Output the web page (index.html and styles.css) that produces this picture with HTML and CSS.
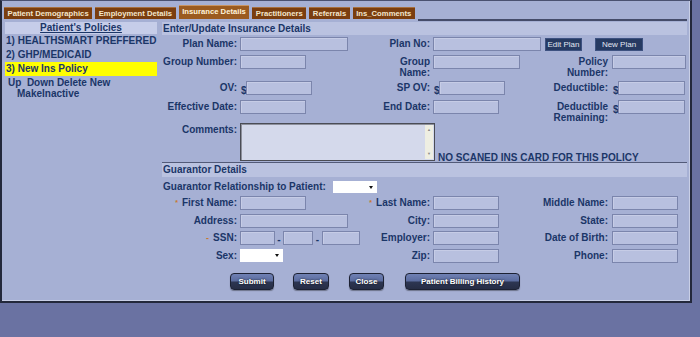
FILE: index.html
```html
<!DOCTYPE html>
<html lang="en">
<head>
    <meta charset="UTF-8">
    <title>Insurance Details</title>
    <link rel="stylesheet" href="styles.css">
</head>
<body>

<div class="frame">
    <div class="tabs">
        <span class="tab">Patient Demographics</span>
        <span class="tab">Employment Details</span>
        <span class="tab active">Insurance Details</span>
        <span class="tab">Practitioners</span>
        <span class="tab">Referrals</span>
        <span class="tab">Ins_Comments</span>
        <span class="tab-fill"></span>
    </div>

    <div class="main">
        <!-- policy list -->
        <div class="policies">
            <div class="pol-head"><u>Patient's Policies</u></div>
            <div class="pol">1) HEALTHSMART PREFFERED</div>
            <div class="pol">2) GHP/MEDICAID</div>
            <div class="pol selected">3) New Ins Policy</div>
            <div class="pol-actions">
                <div>Up&nbsp;&nbsp;Down Delete New</div>
                <div class="indent">MakeInactive</div>
            </div>
        </div>

        <!-- insurance form -->
        <div class="details">
            <div class="sec-head">Enter/Update Insurance Details</div>
            <div class="grid">
                <div class="lbl">Plan Name:</div>
                <div class="fld"><span class="in w108"></span></div>
                <div class="lbl">Plan No:</div>
                <div class="fld"><span class="in w108"></span></div>
                <div class="fld plan-btns">
                    <span class="pbtn edit">Edit Plan</span>
                    <span class="pbtn new">New Plan</span>
                </div>

                <div class="lbl">Group Number:</div>
                <div class="fld"><span class="in w66"></span></div>
                <div class="lbl">Group<br>Name:</div>
                <div class="fld"><span class="in w87"></span></div>
                <div class="lbl lbl3">Policy<br>Number:</div>
                <div class="fld"><span class="in w74"></span></div>

                <div class="lbl">OV:</div>
                <div class="fld"><span class="dollar">$</span><span class="in w66"></span></div>
                <div class="lbl">SP OV:</div>
                <div class="fld"><span class="dollar">$</span><span class="in w66"></span></div>
                <div class="lbl lbl3">Deductible:</div>
                <div class="fld"><span class="dollar">$</span><span class="in w67"></span></div>

                <div class="lbl">Effective Date:</div>
                <div class="fld"><span class="in w66"></span></div>
                <div class="lbl">End Date:</div>
                <div class="fld"><span class="in w66"></span></div>
                <div class="lbl lbl3 tight">Deductible<br>Remaining:</div>
                <div class="fld"><span class="dollar">$</span><span class="in w67"></span></div>

                <div class="lbl">Comments:</div>
                <div class="fld comments-row">
                    <div class="comments">
                        <div class="comments-text"></div>
                        <div class="scroll"><span>&#9650;</span><span>&#9660;</span></div>
                    </div>
                    <span class="note">NO SCANED INS CARD FOR THIS POLICY</span>
                </div>
            </div>

            <div class="sec-head guar">Guarantor Details</div>
            <div class="rel-row">
                <span class="rel-lbl">Guarantor Relationship to Patient:</span>
                <span class="select w44"></span>
            </div>

            <div class="grid g2">
                <div class="lbl"><span class="req">*</span>First Name:</div>
                <div class="fld"><span class="in w66"></span></div>
                <div class="lbl"><span class="req">*</span>Last Name:</div>
                <div class="fld"><span class="in w66"></span></div>
                <div class="lbl lbl3">Middle Name:</div>
                <div class="fld"><span class="in w66"></span></div>

                <div class="lbl">Address:</div>
                <div class="fld"><span class="in w108"></span></div>
                <div class="lbl">City:</div>
                <div class="fld"><span class="in w66"></span></div>
                <div class="lbl lbl3">State:</div>
                <div class="fld"><span class="in w66"></span></div>

                <div class="lbl"><span class="req dash">-</span>SSN:</div>
                <div class="fld">
                    <span class="in w37"></span><span class="ssn-dash">-</span>
                    <span class="in w32"></span><span class="ssn-dash">-</span>
                    <span class="in w41"></span>
                </div>
                <div class="lbl">Employer:</div>
                <div class="fld"><span class="in w66"></span></div>
                <div class="lbl lbl3">Date of Birth:</div>
                <div class="fld"><span class="in w66"></span></div>

                <div class="lbl">Sex:</div>
                <div class="fld"><span class="select w43"></span></div>
                <div class="lbl">Zip:</div>
                <div class="fld"><span class="in w66"></span></div>
                <div class="lbl lbl3">Phone:</div>
                <div class="fld"><span class="in w66"></span></div>
            </div>

            <div class="actions">
                <span class="btn submit">Submit</span>
                <span class="btn reset">Reset</span>
                <span class="btn close">Close</span>
                <span class="btn history">Patient Billing History</span>
            </div>
        </div>
    </div>
</div>

</body>
</html>
```

FILE: styles.css
```css
* {
    box-sizing: border-box;
}

body {
    margin: 0;
    background-color: #6a72a2;
    font-family: "Liberation Sans", Arial, sans-serif;
    font-size: 10px;
    font-weight: bold;
    color: #1b3668;
}

/* main panel */
.frame {
    width: 692px;
    height: 303px;
    background-color: #a6b0d4;
    border: 2px solid #23283b;
    border-top: 1px solid #4a5170;
    box-shadow: inset -1px -1px 0 #c9cfe6;
    padding: 4px 1px 0 2px;
}

/* tabs */
.tabs {
    display: flex;
    align-items: flex-end;
    height: 16px;
}

.tab {
    height: 12px;
    line-height: 11px;
    margin: 0 3px 2px 0;
    padding: 0 3.5px;
    font-size: 7.7px;
    background-color: #7b3e0f;
    color: #f3e6cc;
    border-top: 1px solid #a7703f;
}

.tab.active {
    height: 14px;
    line-height: 12px;
    background-color: #9b5b20;
    color: #fff3da;
    border-top: 1px solid #c99461;
}

.tab-fill {
    flex: 1;
    align-self: stretch;
    margin-right: 2px;
    border-bottom: 2px solid #454c6a;
}

.main {
    display: flex;
    margin: 1px 0 0 1px;
}

/* policy list */
.policies {
    width: 152px;
}

.pol-head {
    height: 12px;
    line-height: 12px;
    background-color: #c6cde9;
    text-align: center;
}

.pol {
    height: 14px;
    line-height: 14px;
    padding-left: 1px;
}

.pol.selected {
    background-color: #ffff00;
}

.pol-actions {
    line-height: 11px;
    padding: 1px 0 0 3px;
}

.pol-actions .indent {
    padding-left: 9px;
}

/* form area */
.details {
    width: 525px;
    margin-left: 5px;
}

.sec-head {
    height: 13px;
    line-height: 13px;
    background-color: #bac2e0;
    padding-left: 1px;
}

.sec-head.guar {
    height: 15px;
    margin-top: 1px;
    border-top: 1px solid #525a78;
    line-height: 14px;
}

.grid {
    display: grid;
    grid-template-columns: 78px 120px 73px 108px 71px 75px;
    row-gap: 3.5px;
    align-items: start;
    margin-top: 2px;
}

.grid.g2 {
    row-gap: 3.6px;
    margin-top: 3px;
}

.lbl {
    text-align: right;
    padding: 1px 3px 0 0;
    line-height: 11px;
    white-space: nowrap;
}

.lbl.lbl3 {
    padding-right: 4px;
}

.lbl.tight {
    margin-bottom: -3px;
}

.fld {
    display: flex;
    align-items: flex-start;
    white-space: nowrap;
}

.in {
    display: block;
    height: 14px;
    background-color: #b8c0df;
    border: 1px solid #7b85ac;
    box-shadow: inset 1px 1px 0 #c6cce6;
}

.w108 { width: 108px; }
.w87 { width: 87px; }
.w74 { width: 74px; }
.w67 { width: 67px; }
.w66 { width: 66px; }
.w44 { width: 44px; }
.w43 { width: 43px; }
.w41 { width: 41px; }
.w37 { width: 37px; }
.w32 { width: 32px; }

.dollar {
    width: 6px;
    padding-left: 1px;
    margin-top: 4px;
    line-height: 11px;
}

.plan-btns {
    grid-column: 5 / 7;
    padding-top: 1px;
}

.pbtn {
    height: 13px;
    line-height: 12px;
    text-align: center;
    font-size: 8px;
    font-weight: normal;
    color: #e1e6f2;
    background-color: #263a62;
    border: 1px solid #3d5180;
}

.pbtn.edit {
    width: 37px;
    margin-left: 4px;
}

.pbtn.new {
    width: 48px;
    margin-left: 13px;
}

/* comments box */
.comments-row {
    grid-column: 2 / 7;
    align-items: flex-end;
}

.comments {
    display: flex;
    width: 195px;
    height: 38px;
    border: 1px solid #4a4c55;
    box-shadow: inset 1px 1px 0 #8d909c;
    background-color: #d4d9eb;
}

.comments-text {
    flex: 1;
}

.scroll {
    width: 8px;
    margin: 1px 1px 1px 0;
    display: flex;
    flex-direction: column;
    justify-content: space-between;
    align-items: center;
    background-color: #eeeee2;
    color: #8a8a8a;
    font-size: 4px;
    line-height: 6px;
    padding: 2px 0;
}

.note {
    margin: 0 0 -2px 3px;
    line-height: 11px;
}

/* guarantor */
.rel-row {
    display: flex;
    align-items: center;
    height: 12px;
    margin-top: 4px;
}

.rel-lbl {
    width: 171px;
    padding-left: 1px;
    line-height: 12px;
}

.select {
    display: block;
    position: relative;
    height: 12px;
    background-color: #ffffff;
}

.fld .select {
    height: 13px;
}

.select::after {
    content: "";
    position: absolute;
    right: 4px;
    top: 5px;
    border-left: 2px solid transparent;
    border-right: 2px solid transparent;
    border-top: 3px solid #111111;
}

.req {
    color: #c9792e;
    font-size: 7px;
    margin-right: 4px;
    vertical-align: 1px;
}

.req.dash {
    font-size: 9px;
    vertical-align: 0;
}

.ssn-dash {
    width: 9px;
    text-align: center;
    margin-top: 3px;
    line-height: 11px;
}

/* bottom buttons */
.actions {
    display: flex;
    margin-top: 10px;
    padding-left: 68px;
}

.btn {
    height: 17px;
    line-height: 15px;
    text-align: center;
    font-size: 8px;
    color: #ffffff;
    text-shadow: 0 0 2px #111;
    border: 1px solid #1c2133;
    border-radius: 4px;
    background: linear-gradient(#7081b4, #5a6b9e 48%, #2d3653 52%, #262d45);
    box-shadow: 0 1px 1px rgba(0, 0, 0, 0.35);
}

.btn.submit { width: 44px; }
.btn.reset { width: 36px; margin-left: 19px; }
.btn.close { width: 35px; margin-left: 20px; }
.btn.history { width: 115px; margin-left: 21px; }
```
